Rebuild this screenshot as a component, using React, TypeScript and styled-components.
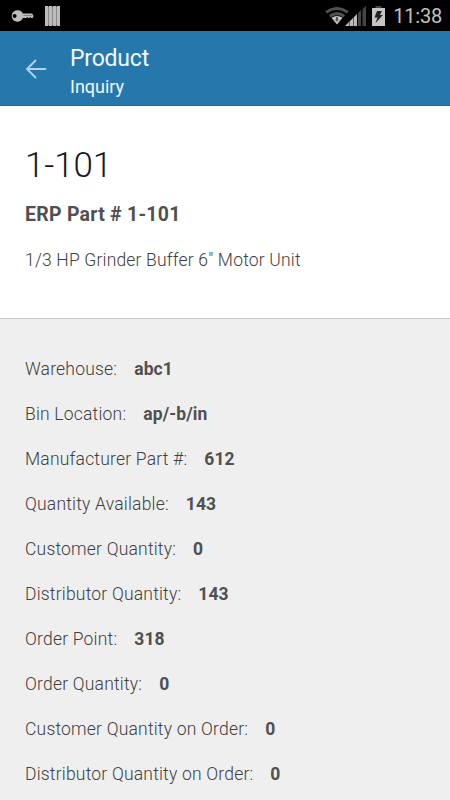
import React from "react";
import styled, { createGlobalStyle } from "styled-components";

const GlobalStyle = createGlobalStyle`
  * { box-sizing: border-box; }
  body { margin: 0; background: #efefef; font-family: Roboto, "Noto Sans", sans-serif; }
`;

const Screen = styled.div`
  width: 450px;
  height: 800px;
  overflow: hidden;
  display: flex;
  flex-direction: column;
  background: #efefef;
`;

const StatusBar = styled.div`
  flex: none;
  height: 31px;
  background: #000;
  display: flex;
  align-items: center;
  justify-content: space-between;
  padding: 0 8px 0 11px;
`;

const StatusGroup = styled.div`
  display: flex;
  align-items: center;
`;

const Icon = styled.svg<{ $gap?: number }>`
  display: block;
  flex: none;
  margin-left: ${({ $gap = 0 }) => $gap}px;
`;

const Clock = styled.span`
  margin-left: 8px;
  color: #c0c0c0;
  font-size: 20px;
  line-height: 31px;
  letter-spacing: -0.2px;
  padding-top: 1px;
`;

const Header = styled.header`
  flex: none;
  height: 75px;
  background: #2678ac;
  border-bottom: 1px solid #1d6ca0;
  display: flex;
`;

const BackButton = styled.button`
  width: 70px;
  height: 75px;
  padding: 0 0 0 25px;
  border: 0;
  background: none;
`;

const Titles = styled.div`
  display: flex;
  flex-direction: column;
  padding-top: 13px;
  color: #f4f8fb;
`;

const Title = styled.span`
  font-size: 23px;
  line-height: 29px;
  letter-spacing: -0.2px;
`;

const Subtitle = styled.span`
  font-size: 18px;
  line-height: 27px;
`;

const Summary = styled.section`
  flex: none;
  height: 213px;
  background: #fff;
  border-bottom: 1px solid #c4c4c4;
  padding: 35px 25px 0;
  color: #505050;
`;

const ProductName = styled.h1`
  margin: 0;
  font-size: 35px;
  line-height: 50px;
  font-weight: 350;
  letter-spacing: -0.1px;
  color: #181818;
`;

const PartNumber = styled.h2`
  margin: 9px 0 0;
  font-size: 19.5px;
  line-height: 30px;
  font-weight: 700;
  letter-spacing: 0.25px;
`;

const Description = styled.p`
  margin: 15px 0 0;
  font-size: 17.5px;
  line-height: 31px;
  font-weight: 350;
  letter-spacing: 0.18px;
  color: #404040;
`;

const Details = styled.dl`
  margin: 0;
  padding: 27px 25px 0;
`;

const Row = styled.div`
  height: 45px;
  display: flex;
  align-items: center;
  gap: 17px;
  font-size: 17.5px;
  color: #505050;
  white-space: nowrap;
`;

const Label = styled.dt`
  font-weight: 350;
  letter-spacing: 0.2px;
  color: #404040;
`;

const Value = styled.dd`
  margin: 0;
  font-weight: 700;
  letter-spacing: 0.1px;
`;

const rows = [
  ["Warehouse:", "abc1"],
  ["Bin Location:", "ap/-b/in"],
  ["Manufacturer Part #:", "612"],
  ["Quantity Available:", "143"],
  ["Customer Quantity:", "0"],
  ["Distributor Quantity:", "143"],
  ["Order Point:", "318"],
  ["Order Quantity:", "0"],
  ["Customer Quantity on Order:", "0"],
  ["Distributor Quantity on Order:", "0"],
];

const KeyIcon = () => (
  <Icon width="24" height="14" viewBox="0 0 25 14">
    <path
      fill="#bdbdbd"
      fillRule="evenodd"
      d="M7 1a6 6 0 0 1 5.400 3.500H22l1.500 2.500-1 2h-1.500l-1-1-1 1H18l-1-1-1 1h-3.600A6 6 0 1 1 7 1ZM3.800 5a2 2 0 1 0 0 4 2 2 0 0 0 0-4Z"
    />
    <path stroke="#666" d="M13 6.500h9" strokeWidth=".7" />
  </Icon>
);

const BarsIcon = () => (
  <Icon $gap={10} width="15" height="20" viewBox="0 0 15 20">
    <path fill="#888" d="M0 .5h15v19H0z" />
    <path fill="#bcbcbc" d="M0 0h3v20H0zM4 0h3v20H4zM8 0h3v20H8zM12 0h3v20h-3z" />
  </Icon>
);

const WifiIcon = () => (
  <Icon width="24" height="18" viewBox="0 0 24 18">
    <g fill="none" stroke="#505050" strokeWidth="3">
      <path d="M1.200 5.300Q12-2.300 22.800 5.300" />
      <path d="M4.800 9.200Q12 4 19.200 9.200" />
    </g>
    <path fill="#c4c4c4" d="M6.500 10.700q5.500-3.400 11 0L12 17.500Z" />
    <path fill="#555" d="M11 10h2v2.500h1.200L12 14.800 9.800 12.500H11Z" />
  </Icon>
);

const SignalIcon = () => (
  <Icon $gap={-4} width="21" height="20" viewBox="0 0 21 20">
    <path fill="#bcbcbc" d="M0 20l4-4v4zM4.500 15.500l3.500-3.500v8H4.500zM8.500 11.500l3.500-3.500v12H8.500z" />
    <path fill="#444" d="M13 7l3-3v16h-3zM17.500 3L21 0v20h-3.500z" />
  </Icon>
);

const BatteryIcon = () => (
  <Icon $gap={6} width="13" height="20" viewBox="0 0 13 20">
    <path fill="#444" d="M3.500 0h6v2h-6z" />
    <path fill="#c4c4c4" d="M0 2h13v18H0z" />
    <path fill="#222" d="M5 5h5L8 9h3l-7.500 8L5.500 11.500H2.500Z" />
  </Icon>
);

export default function App() {
  return (
    <Screen>
      <GlobalStyle />
      <StatusBar>
        <StatusGroup>
          <KeyIcon />
          <BarsIcon />
        </StatusGroup>
        <StatusGroup>
          <WifiIcon />
          <SignalIcon />
          <BatteryIcon />
          <Clock>11:38</Clock>
        </StatusGroup>
      </StatusBar>
      <Header>
        <BackButton aria-label="Back">
          <Icon width="22" height="20" viewBox="0 0 22 20">
            <path
              d="M20.500 10H2M10.500 1.500 2 10l8.500 8.500"
              fill="none"
              stroke="#afd5ee"
              strokeWidth="1.800"
              strokeLinecap="round"
            />
          </Icon>
        </BackButton>
        <Titles>
          <Title>Product</Title>
          <Subtitle>Inquiry</Subtitle>
        </Titles>
      </Header>
      <Summary>
        <ProductName>1-101</ProductName>
        <PartNumber>ERP Part # 1-101</PartNumber>
        <Description>1/3 HP Grinder Buffer 6" Motor Unit</Description>
      </Summary>
      <Details>
        {rows.map(([label, value]) => (
          <Row key={label}>
            <Label>{label}</Label>
            <Value>{value}</Value>
          </Row>
        ))}
      </Details>
    </Screen>
  );
}
